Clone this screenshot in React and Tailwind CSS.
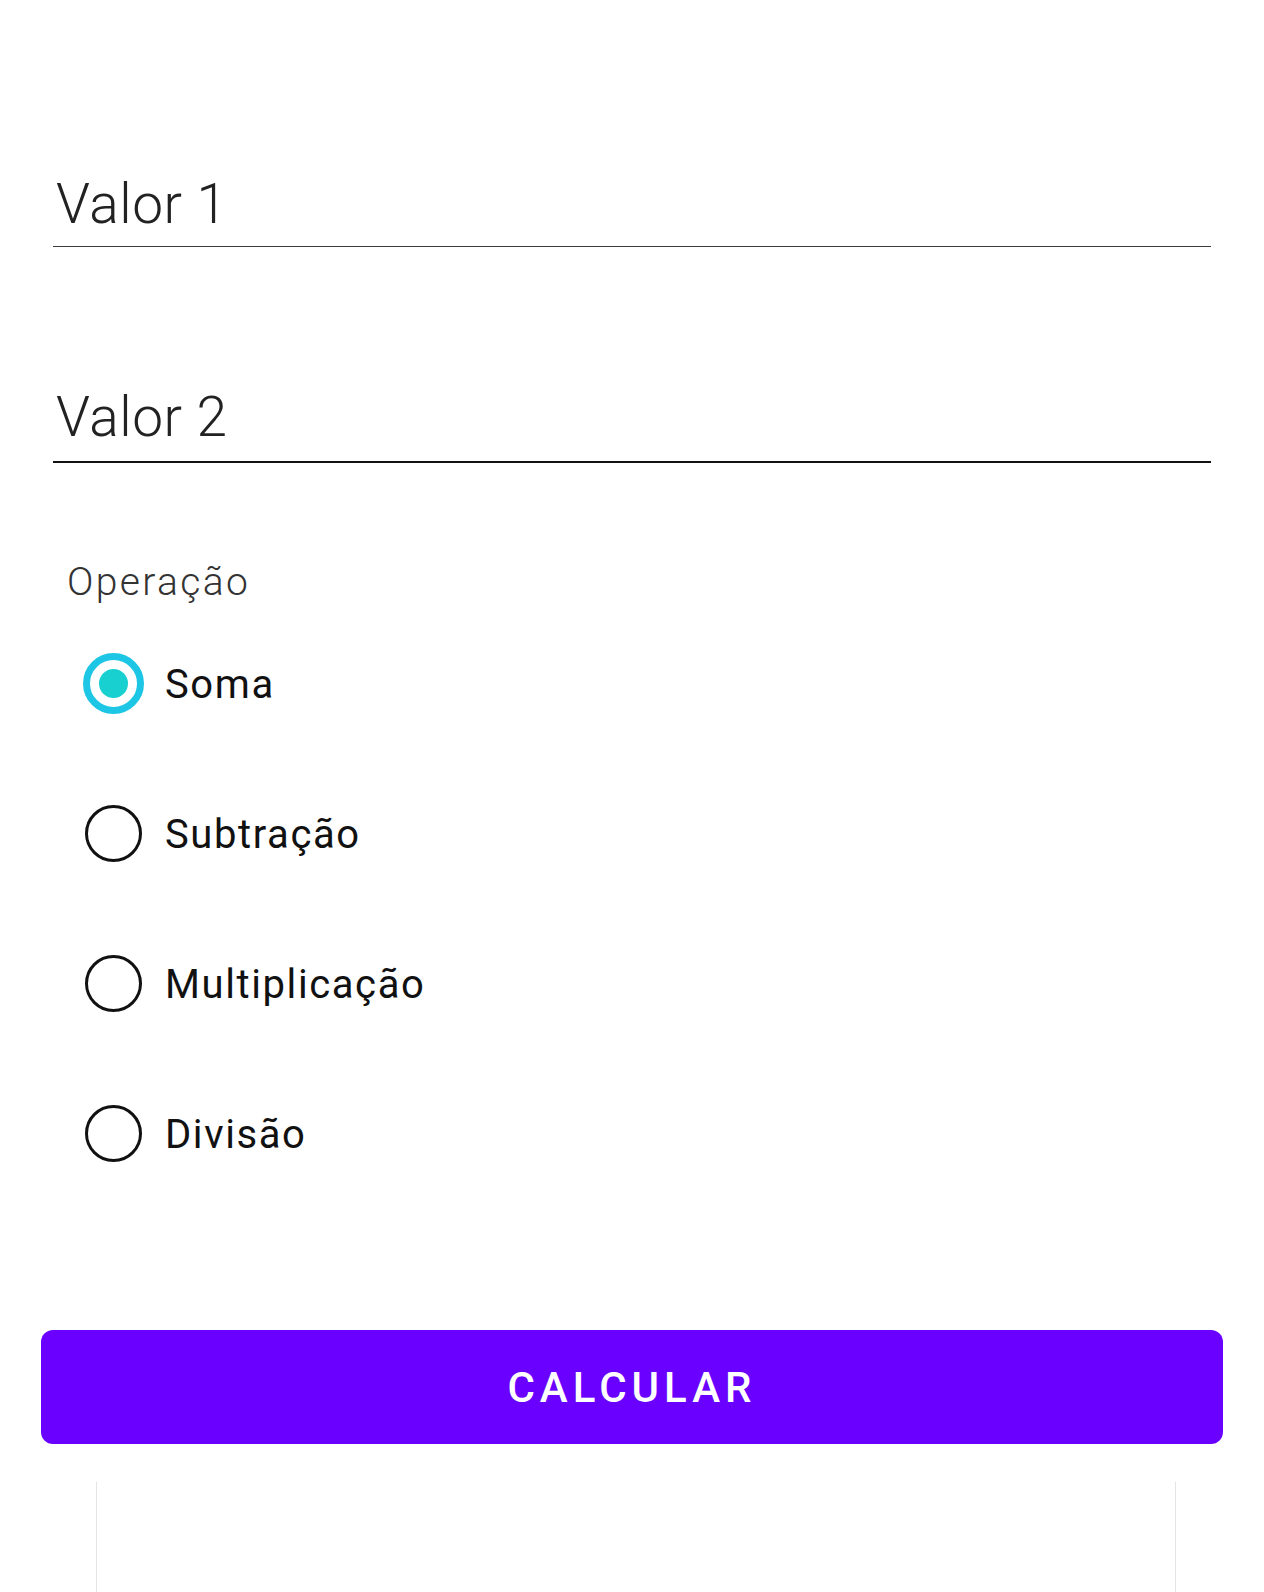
const operations = ["Soma", "Subtração", "Multiplicação", "Divisão"];

function Field({ label, line }) {
  return (
    <div>
      <div className="pl-[3px] text-[55px] leading-[64px] font-light tracking-[0.01em] text-[#222]">
        {label}
      </div>
      <div className={line} />
    </div>
  );
}

function Radio({ label, checked }) {
  return (
    <div className="flex items-center h-[60px] pl-[30px]">
      <div className="w-[61px] h-[61px] flex items-center justify-center">
        {checked ? (
          <div className="w-[61px] h-[61px] rounded-full border-[7px] border-[#1ec6e6] flex items-center justify-center">
            <div className="w-[29px] h-[29px] rounded-full bg-[#19d0d0]" />
          </div>
        ) : (
          <div className="w-[57px] h-[57px] rounded-full border-[3px] border-[#111]" />
        )}
      </div>
      <span className="ml-[21px] mt-[3px] text-[40px] leading-[48px] tracking-[0.04em] text-[#111]">{label}</span>
    </div>
  );
}

export default function App() {
  return (
    <div className="w-full h-[1592px] bg-white overflow-hidden font-['Roboto',sans-serif]">
      <div className="px-[53px] pt-[172px]">
        <Field label="Valor 1" line="mt-[10px] h-px bg-[#3a3a3a]" />
        <div className="mt-[138px]">
          <Field label="Valor 2" line="mt-[12px] h-[2px] bg-[#111]" />
        </div>

        <div className="mt-[96px] pl-[14px] text-[39px] leading-[46px] font-light tracking-[0.06em] text-[#333]">
          Operação
        </div>

        <div className="mt-[48px] flex flex-col gap-[90px]">
          {operations.map((op, i) => (
            <Radio key={op} label={op} checked={i === 0} />
          ))}
        </div>

        <button className="mt-[167px] -mx-[12px] w-[calc(100%+24px)] h-[114px] rounded-[12px] bg-[#6a00ff] text-white text-[42px] font-medium tracking-[0.12em] flex items-center justify-center">
          CALCULAR
        </button>

        <div className="mt-[38px] ml-[43px] mr-[35px] h-[120px] border-x border-[#e4e4e4]" />
      </div>
    </div>
  );
}
